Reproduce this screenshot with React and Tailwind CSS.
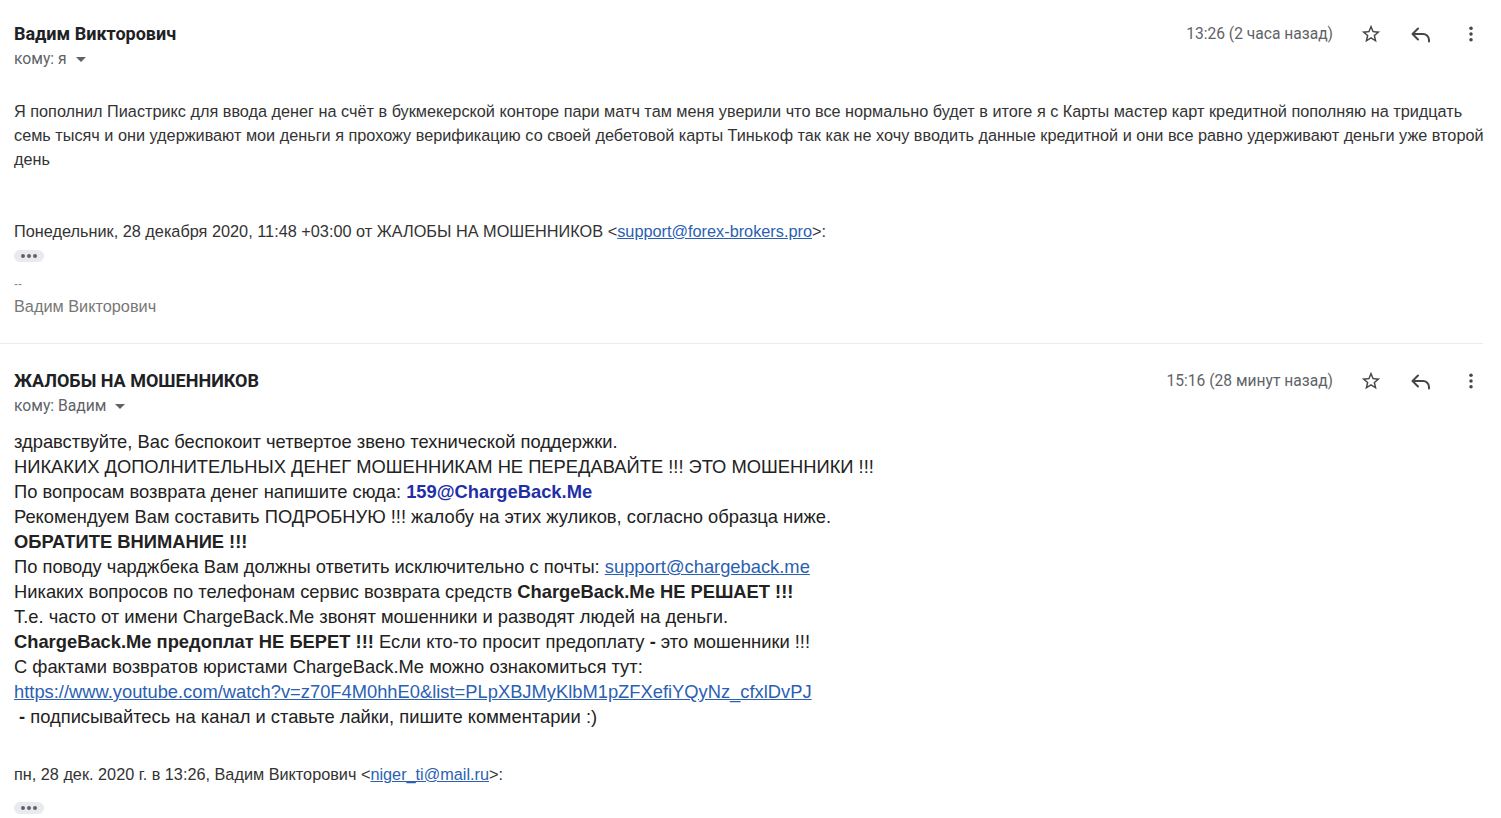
import React from "react";

const roboto = { fontFamily: "Roboto, 'Liberation Sans', sans-serif" };

function Star() {
  return (
    <svg width="22" height="22" viewBox="0 0 24 24" fill="#444746">
      <path d="M22 9.24l-7.19-.62L12 2 9.19 8.63 2 9.24l5.46 4.73L5.82 21 12 17.27 18.18 21l-1.63-7.03L22 9.24zM12 15.4l-3.76 2.27 1-4.28-3.32-2.88 4.38-.38L12 6.1l1.71 4.04 4.38.38-3.32 2.88 1 4.28L12 15.4z" />
    </svg>
  );
}

function Reply() {
  return (
    <svg width="24" height="24" viewBox="0 0 24 24" fill="none" stroke="#444746" strokeWidth="2" strokeLinecap="round" strokeLinejoin="round">
      <path d="M9 6.5L3.5 12 9 17.5" />
      <path d="M4 12h10a6 6 0 0 1 6 6v1.5" />
    </svg>
  );
}

function More() {
  return (
    <svg width="20" height="20" viewBox="0 0 24 24" fill="#444746">
      <circle cx="12" cy="5" r="2.1" />
      <circle cx="12" cy="12" r="2.1" />
      <circle cx="12" cy="19" r="2.1" />
    </svg>
  );
}

function Caret() {
  return (
    <svg width="10" height="6" viewBox="0 0 10 6" className="ml-[9px] mt-[2px]">
      <path d="M0 0h10L5 5z" fill="#5f6368" />
    </svg>
  );
}

function Dots() {
  return (
    <div className="flex h-[12px] w-[30px] items-center justify-center gap-[2px] rounded-[6px] bg-[#e8eaed]">
      <span className="h-[4px] w-[4px] rounded-full bg-[#5f6368]" />
      <span className="h-[4px] w-[4px] rounded-full bg-[#5f6368]" />
      <span className="h-[4px] w-[4px] rounded-full bg-[#5f6368]" />
    </div>
  );
}

function Header({ name, to, time }) {
  return (
    <div className="flex items-start justify-between">
      <div style={roboto}>
        <div className="text-[18px] font-bold leading-[20px] text-[#202124]">{name}</div>
        <div className="mt-[5px] flex items-center text-[15.7px] leading-[20px] text-[#5f6368]">
          <span>{to}</span>
          <Caret />
        </div>
      </div>
      <div className="flex h-[20px] items-center" style={roboto}>
        <span className="text-[15.6px] leading-[20px] text-[#5f6368]">{time}</span>
        <div className="ml-[26px] flex h-[24px] w-[24px] items-center justify-center"><Star /></div>
        <div className="ml-[26px] flex h-[24px] w-[24px] items-center justify-center"><Reply /></div>
        <div className="ml-[26px] flex h-[24px] w-[24px] items-center justify-center"><More /></div>
      </div>
    </div>
  );
}

export default function App() {
  const arial = { fontFamily: "'Liberation Sans', Arial, sans-serif" };
  return (
    <div className="min-h-[818px] w-[1501px] bg-white">
      <div className="pl-[14px] pr-[18px] pt-[24px]">
        <Header name="Вадим Викторович" to="кому: я" time="13:26 (2 часа назад)" />
        <div className="mt-[30px] w-[1478px] text-[16.25px] leading-[24px] text-[#333]" style={arial}>
          Я пополнил Пиастрикс для ввода денег на счёт в букмекерской конторе пари матч там меня уверили что все нормально будет в итоге я с Карты мастер карт кредитной пополняю на тридцать семь тысяч и они удерживают мои деньги я прохожу верификацию со своей дебетовой карты Тинькоф так как не хочу вводить данные кредитной и они все равно удерживают деньги уже второй день
        </div>
        <div className="mt-[48px] text-[16.3px] leading-[24px] text-[#333]" style={arial}>
          Понедельник, 28 декабря 2020, 11:48 +03:00 от ЖАЛОБЫ НА МОШЕННИКОВ &lt;<a className="text-[#2b5fb3] underline">support@forex-brokers.pro</a>&gt;:
        </div>
        <div className="mt-[7px]"><Dots /></div>
        <div className="mt-[15px] text-[12px] leading-[14px] text-[#888]" style={arial}>--</div>
        <div className="mt-[3px] text-[16.3px] leading-[24px] text-[#777]" style={arial}>Вадим Викторович</div>
      </div>
      <div className="mt-[25px] mr-[18px] h-px bg-[#ececec]" />
      <div className="pl-[14px] pr-[18px] pt-[27px]">
        <Header name="ЖАЛОБЫ НА МОШЕННИКОВ" to="кому: Вадим" time="15:16 (28 минут назад)" />
        <div className="mt-[13px] text-[18.33px] leading-[25px] text-[#222]" style={arial}>
          <div>здравствуйте, Вас беспокоит четвертое звено технической поддержки.</div>
          <div>НИКАКИХ ДОПОЛНИТЕЛЬНЫХ ДЕНЕГ МОШЕННИКАМ НЕ ПЕРЕДАВАЙТЕ !!! ЭТО МОШЕННИКИ !!!</div>
          <div>По вопросам возврата денег напишите сюда: <b className="text-[#1f2fa8]">159@ChargeBack.Me</b></div>
          <div>Рекомендуем Вам составить ПОДРОБНУЮ !!! жалобу на этих жуликов, согласно образца ниже.</div>
          <div><b>ОБРАТИТЕ ВНИМАНИЕ !!!</b></div>
          <div>По поводу чарджбека Вам должны ответить исключительно с почты: <a className="text-[#2b5fb3] underline">support@chargeback.me</a></div>
          <div>Никаких вопросов по телефонам сервис возврата средств <b>ChargeBack.Me НЕ РЕШАЕТ !!!</b></div>
          <div>Т.е. часто от имени ChargeBack.Me звонят мошенники и разводят людей на деньги.</div>
          <div><b>ChargeBack.Me предоплат НЕ БЕРЕТ !!!</b> Если кто-то просит предоплату <b>-</b> это мошенники !!!</div>
          <div>С фактами возвратов юристами ChargeBack.Me можно ознакомиться тут:</div>
          <div><a className="text-[#2b5fb3] underline">https://www.youtube.com/watch?v=z70F4M0hhE0&amp;list=PLpXBJMyKlbM1pZFXefiYQyNz_cfxlDvPJ</a></div>
          <div>&nbsp;<b>-</b> подписывайтесь на канал и ставьте лайки, пишите комментарии :)</div>
        </div>
        <div className="mt-[35px] text-[16.25px] leading-[20px] text-[#333]" style={arial}>
          пн, 28 дек. 2020 г. в 13:26, Вадим Викторович &lt;<a className="text-[#2b5fb3] underline">niger_ti@mail.ru</a>&gt;:
        </div>
        <div className="mt-[18px]"><Dots /></div>
      </div>
    </div>
  );
}
